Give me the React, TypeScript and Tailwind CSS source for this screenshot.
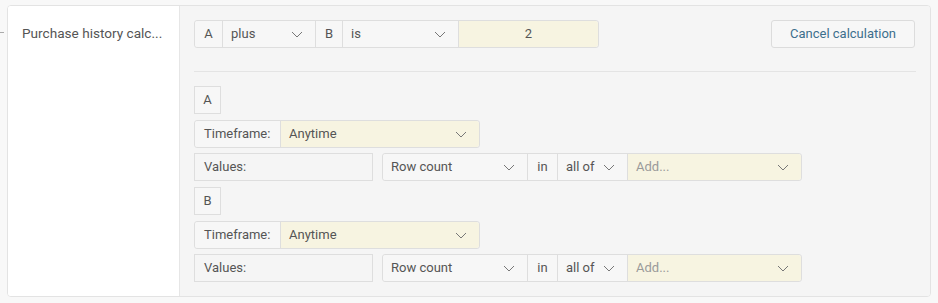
import React from "react";

const Chevron = () => (
  <svg width="12" height="7" viewBox="0 0 12 7" fill="none" className="shrink-0">
    <path d="M1 1l5 5 5-5" stroke="#777" strokeWidth="1" />
  </svg>
);

const Cell = ({ w, children, center, yellow, first, last, placeholder }: { w: number; children: React.ReactNode; center?: boolean; yellow?: boolean; first?: boolean; last?: boolean; placeholder?: boolean }) => (
  <div
    style={{ width: w }}
    className={`h-full flex items-center ${center ? "justify-center" : "px-[8px]"} ${yellow ? "bg-[#f7f4e1]" : "bg-[#f7f7f7]"} ${first ? "" : "border-l border-[#dedede]"} ${placeholder ? "text-[#9a9a9a]" : "text-[#555]"} ${first ? "rounded-l-[3px]" : ""} ${last ? "rounded-r-[3px]" : ""}`}
  >
    {children}
  </div>
);

const SelCell = ({ w, label, yellow, first, last, placeholder }: { w: number; label: string; yellow?: boolean; first?: boolean; last?: boolean; placeholder?: boolean }) => (
  <div
    style={{ width: w }}
    className={`h-full flex items-center justify-between pl-[8px] pr-[12px] ${yellow ? "bg-[#f7f4e1]" : "bg-[#f7f7f7]"} ${first ? "" : "border-l border-[#dedede]"} ${placeholder ? "text-[#9a9a9a]" : "text-[#555]"} ${first ? "rounded-l-[3px]" : ""} ${last ? "rounded-r-[3px]" : ""}`}
  >
    <span>{label}</span>
    <Chevron />
  </div>
);

const Group = ({ children }: { children: React.ReactNode }) => (
  <div className="h-[28px] flex border border-[#dedede] rounded-[3px] box-border">{children}</div>
);

const Block = ({ name }: { name: string }) => (
  <>
    <div className="h-[28px] w-[27px] flex items-center justify-center border border-[#dedede] bg-[#f7f7f7] text-[#555]">{name}</div>
    <div className="mt-[6px] flex">
      <Group>
        <div className="w-[85px] h-full flex items-center pl-[9px] bg-[#f7f7f7] text-[#555] rounded-l-[3px]">Timeframe:</div>
        <SelCell w={199} label="Anytime" yellow last />
      </Group>
    </div>
    <div className="mt-[5px] flex items-center">
      <div className="w-[179px] h-[28px] flex items-center pl-[9px] border border-[#dedede] bg-[#f5f5f5] text-[#555]">Values:</div>
      <div className="ml-[9px]">
        <Group>
          <SelCell w={144} label="Row count" first />
          <Cell w={30} center>in</Cell>
          <SelCell w={70} label="all of" />
          <SelCell w={174} label="Add..." yellow last placeholder />
        </Group>
      </div>
    </div>
  </>
);

export default function App() {
  return (
    <div
      className="w-[938px] h-[303px] bg-[#f8f8f8] relative text-[13px]"
      style={{ fontFamily: "Roboto, 'Noto Sans', sans-serif" }}
    >
      <div className="absolute left-0 top-[32px] w-[4px] h-px bg-[#aaa]" />
      <div className="absolute left-[7px] top-[5px] w-[924px] h-[292px] border border-[#e3e3e3] rounded-[4px] flex overflow-hidden bg-white">
        <div className="w-[172px] shrink-0 bg-white border-r border-[#e6e6e6] pl-[14px] pt-[17px] text-[#555] text-[13.6px] whitespace-nowrap">
          Purchase history calc...
        </div>
        <div className="flex-1 bg-[#f5f5f5] px-[14px] pt-[14px]">
          <div className="flex items-center justify-between">
            <Group>
              <Cell w={27} center first>A</Cell>
              <SelCell w={93} label="plus" />
              <Cell w={27} center>B</Cell>
              <SelCell w={116} label="is" />
              <Cell w={140} center yellow last>2</Cell>
            </Group>
            <button className="h-[28px] w-[144px] border border-[#dcdcdc] rounded-[3px] bg-[#f7f7f7] text-[#3d6f8d] text-[13px] mr-[1px]">
              Cancel calculation
            </button>
          </div>
          <div className="mt-[23px] h-px bg-[#e4e4e4]" />
          <div className="mt-[14px] flex flex-col">
            <Block name="A" />
            <div className="mt-[6px] flex flex-col">
              <Block name="B" />
            </div>
          </div>
        </div>
      </div>
    </div>
  );
}
